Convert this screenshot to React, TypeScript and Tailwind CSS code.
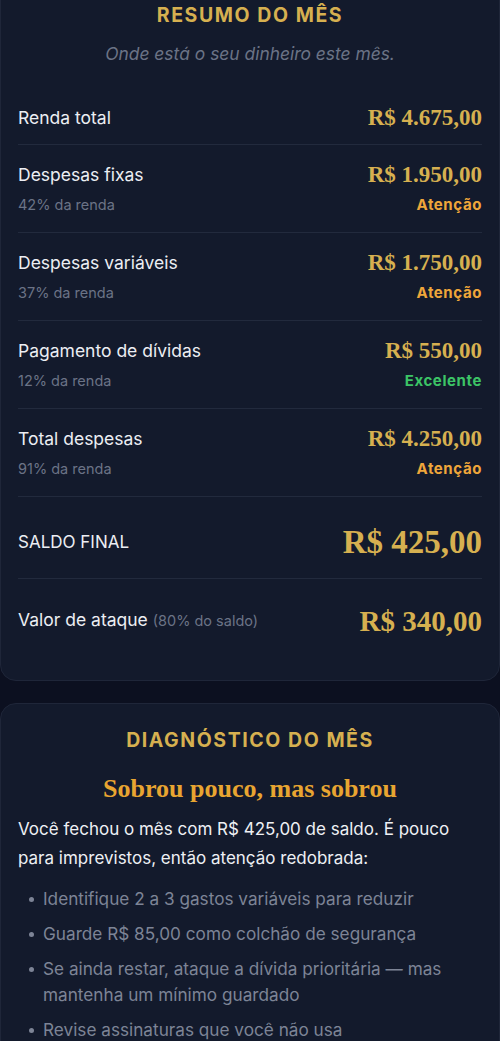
import React from "react";

type Row = {
  label: string;
  value: string;
  note?: string;
  status?: "warn" | "good";
};

const rows: Row[] = [
  { label: "Renda total", value: "R$ 4.675,00" },
  { label: "Despesas fixas", value: "R$ 1.950,00", note: "42% da renda", status: "warn" },
  { label: "Despesas variáveis", value: "R$ 1.750,00", note: "37% da renda", status: "warn" },
  { label: "Pagamento de dívidas", value: "R$ 550,00", note: "12% da renda", status: "good" },
  { label: "Total despesas", value: "R$ 4.250,00", note: "91% da renda", status: "warn" },
];

const tips = [
  "Identifique 2 a 3 gastos variáveis para reduzir",
  "Guarde R$ 85,00 como colchão de segurança",
  "Se ainda restar, ataque a dívida prioritária — mas mantenha um mínimo guardado",
  "Revise assinaturas que você não usa",
];

const sans = "font-['Inter','DejaVu_Sans',sans-serif]";
const serif = "font-['Liberation_Serif','DejaVu_Serif',serif]";

export default function App() {
  return (
    <div className={`min-h-screen bg-[#0c1020] overflow-hidden ${sans}`}>
      {/* Resumo */}
      <section className="-mt-8 rounded-2xl border border-[#1f2639] bg-[#131a2c] px-[17px] pt-[34px] pb-[43px]">
        <h2 className="text-center text-[19.5px] font-bold tracking-[0.08em] text-[#d6b050] leading-6">
          RESUMO DO MÊS
        </h2>
        <p className="mt-[15px] text-center text-[17.4px] italic text-[#6b7386] leading-6">
          Onde está o seu dinheiro este mês.
        </p>

        <div className="mt-[38px]">
          {rows.map((row, i) => (
            <div
              key={row.label}
              className={`flex flex-col ${i === 0 ? "pb-[12px]" : "py-[16px]"} border-b border-[#222a3d]`}
            >
              <div className="flex items-center justify-between">
                <span className="text-[17.5px] text-[#eceef3] leading-7">{row.label}</span>
                <span className={`${serif} text-[23px] font-bold text-[#d6b050] leading-7`}>
                  {row.value}
                </span>
              </div>
              {row.note && (
                <div className="mt-[5px] flex items-center justify-between leading-[22px]">
                  <span className="text-[14.5px] text-[#6b7386]">{row.note}</span>
                  <span
                    className={`text-[15px] font-bold tracking-[0.04em] ${
                      row.status === "good" ? "text-[#3cc466]" : "text-[#efa63a]"
                    }`}
                  >
                    {row.status === "good" ? "Excelente" : "Atenção"}
                  </span>
                </div>
              )}
            </div>
          ))}

          <div className="flex items-center justify-between border-b border-[#222a3d] pt-[28px] pb-[19px]">
            <span className="text-[17px] text-[#eceef3] leading-[34px]">SALDO FINAL</span>
            <span className={`${serif} text-[33px] font-bold text-[#d6b050] leading-[34px]`}>
              R$ 425,00
            </span>
          </div>

          <div className="flex items-center justify-between pt-[25px]">
            <span className="text-[17.5px] text-[#eceef3] leading-8">
              Valor de ataque{" "}
              <span className="text-[14.5px] text-[#6b7386]">(80% do saldo)</span>
            </span>
            <span className={`${serif} text-[29px] font-bold text-[#d6b050] leading-8`}>
              R$ 340,00
            </span>
          </div>
        </div>
      </section>

      {/* Diagnóstico */}
      <section className="mt-[22px] rounded-2xl border border-[#1f2639] bg-[#131a2c] px-[17px] pt-[24px] pb-[24px]">
        <h2 className="text-center text-[19.5px] font-bold tracking-[0.08em] text-[#d6b050] leading-6">
          DIAGNÓSTICO DO MÊS
        </h2>
        <h3 className={`${serif} mt-[21px] text-center text-[26px] font-bold text-[#e8a531] leading-8`}>
          Sobrou pouco, mas sobrou
        </h3>
        <p className="mt-[10px] text-[17px] text-[#eef0f4] leading-[29px]">
          Você fechou o mês com R$ 425,00 de saldo. É pouco para imprevistos, então atenção
          redobrada:
        </p>
        <ul className="mt-[13px] flex flex-col gap-[9px] pl-[11px]">
          {tips.map((t) => (
            <li key={t} className="flex gap-[9px] text-[17.2px] text-[#7d8496] leading-[26px]">
              <span className="mt-[11px] h-[5px] w-[5px] shrink-0 rounded-full bg-[#7d8496]" />
              <span>{t}</span>
            </li>
          ))}
        </ul>
      </section>
    </div>
  );
}
